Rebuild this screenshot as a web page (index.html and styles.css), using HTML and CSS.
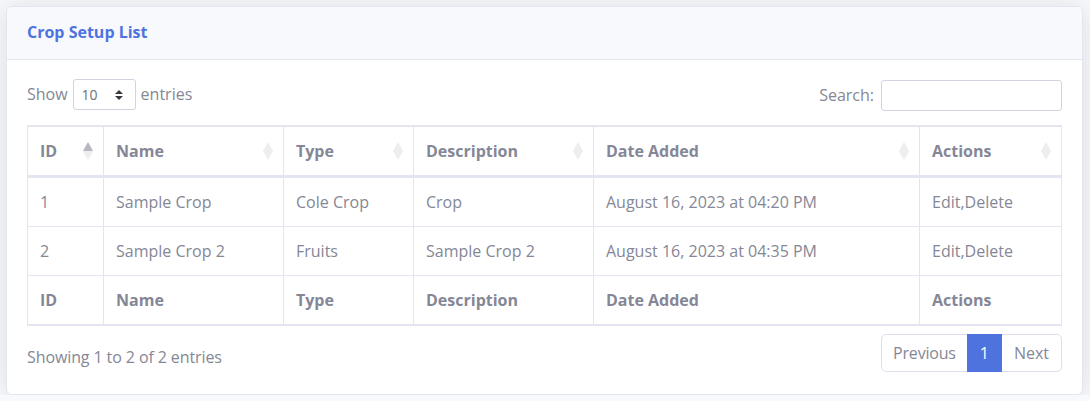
FILE: index.html
```html
<!DOCTYPE html>
<html lang="en">
<head>
<meta charset="utf-8">
<title>Crop Setup List</title>
<link rel="stylesheet" href="styles.css">
</head>
<body>
<div class="card">
  <div class="card-header">
    <h6 class="card-title">Crop Setup List</h6>
  </div>
  <div class="card-body">
    <div class="dt-top">
      <label class="dt-length">Show
        <span class="select-wrap">
          <select class="select">
            <option>10</option><option>25</option><option>50</option><option>100</option>
          </select>
          <svg class="select-arrow" width="8" height="10" viewBox="0 0 4 5"><path fill="#343a40" d="M2 0L0 2h4zm0 5L0 3h4z"/></svg>
        </span>
        entries</label>
      <label class="dt-search">Search:<input type="search" class="search-input"></label>
    </div>
    <table class="dt-table">
      <thead>
        <tr>
          <th class="c-id sort asc">ID</th>
          <th class="c-name sort">Name</th>
          <th class="c-type sort">Type</th>
          <th class="c-desc sort">Description</th>
          <th class="c-date sort">Date Added</th>
          <th class="c-act sort">Actions</th>
        </tr>
      </thead>
      <tbody>
        <tr>
          <td>1</td><td>Sample Crop</td><td>Cole Crop</td><td>Crop</td><td>August 16, 2023 at 04:20 PM</td><td>Edit,Delete</td>
        </tr>
        <tr>
          <td>2</td><td>Sample Crop 2</td><td>Fruits</td><td>Sample Crop 2</td><td>August 16, 2023 at 04:35 PM</td><td>Edit,Delete</td>
        </tr>
      </tbody>
      <tfoot>
        <tr>
          <th>ID</th><th>Name</th><th>Type</th><th>Description</th><th>Date Added</th><th>Actions</th>
        </tr>
      </tfoot>
    </table>
    <div class="dt-bottom">
      <div class="dt-info">Showing 1 to 2 of 2 entries</div>
      <ul class="pagination">
        <li class="page-item disabled"><span class="page-link">Previous</span></li>
        <li class="page-item active"><span class="page-link">1</span></li>
        <li class="page-item disabled"><span class="page-link">Next</span></li>
      </ul>
    </div>
  </div>
</div>
</body>
</html>
```
FILE: styles.css
```css
* { box-sizing: border-box; }
html, body { margin: 0; }
body {
  background: #f8f9fc;
  padding: 6px 7px 0 6px;
  font-family: "Open Sans", "Noto Sans", sans-serif;
  font-size: 16px;
  line-height: 1.5;
  color: #858796;
}
.card {
  background: #fff;
  border: 1px solid #e3e6f0;
  border-radius: 6px;
  box-shadow: 0 2px 28px 0 rgba(58, 59, 69, 0.15);
  overflow: hidden;
}
.card-header {
  background: #f8f9fc;
  border-bottom: 1px solid #e3e6f0;
  padding: 15px 20px 17px 20px;
}
.card-title {
  margin: 0;
  font-size: 16px;
  line-height: 20px;
  font-weight: 700;
  color: #4e73df;
}
.card-body {
  padding: 19px 20px 20px 20px;
}
.dt-top {
  display: flex;
  justify-content: space-between;
  align-items: flex-start;
}
.dt-length, .dt-search {
  display: flex;
  align-items: center;
  white-space: nowrap;
  margin-bottom: 8px;
  height: 32px;
  font-weight: 400;
}
.dt-length { padding-bottom: 3px; }
.dt-search { padding-bottom: 1px; }
.select-wrap {
  position: relative;
  display: inline-block;
  margin: 2px 5px 0 5px;
}
.select {
  appearance: none;
  -webkit-appearance: none;
  height: 31px;
  width: 63px;
  padding: 4px 28px 4px 8px;
  font-family: inherit;
  font-size: 14px;
  line-height: 21px;
  color: #6e707e;
  background: #fff;
  border: 1px solid #d1d3e2;
  border-radius: 3px;
  display: block;
}
.select-arrow {
  position: absolute;
  right: 13px;
  top: 11px;
  pointer-events: none;
}
.search-input {
  margin-left: 7px;
  margin-top: 1px;
  width: 181px;
  height: 31px;
  border: 1px solid #d1d3e2;
  border-radius: 3px;
  padding: 4px 8px;
  font-family: inherit;
  font-size: 14px;
  color: #6e707e;
  background: #fff;
}
.dt-table {
  width: 100%;
  table-layout: fixed;
  border-collapse: separate;
  border-spacing: 0;
  border: 1px solid #e3e6f0;
  margin: 6px 0;
  color: #858796;
}
.dt-table th, .dt-table td {
  padding: 12px;
  text-align: left;
  vertical-align: top;
  border-top: 1px solid #e3e6f0;
  border-right: 1px solid #e3e6f0;
  line-height: 24px;
}
.dt-table th:last-child, .dt-table td:last-child { border-right: 0; }
.dt-table th { font-weight: 700; }
.dt-table thead th {
  border-bottom: 2px solid #e3e6f0;
  position: relative;
  padding-right: 30px;
}
.dt-table tfoot th { border-bottom: 1px solid #e3e6f0; }
.c-id { width: 76px; }
.c-name { width: 180px; }
.c-type { width: 130px; }
.c-desc { width: 180px; }
.c-date { width: 326px; }
.sort::before, .sort::after {
  content: "";
  position: absolute;
  right: 10px;
  width: 0;
  height: 0;
  border-left: 5px solid transparent;
  border-right: 5px solid transparent;
}
.sort::before {
  bottom: 50%;
  border-bottom: 9px solid #eeeef1;
}
.sort::after {
  top: 50%;
  border-top: 9px solid #eeeef1;
}
.sort.asc::before { border-bottom-color: #b6b7c0; }
.dt-bottom {
  display: flex;
  justify-content: space-between;
  align-items: flex-start;
}
.dt-info {
  padding-top: 13px;
  white-space: nowrap;
  letter-spacing: -0.1px;
}
.pagination {
  display: flex;
  list-style: none;
  margin: 2px 0;
  padding: 0;
}
.page-link {
  display: block;
  padding: 8px 12px;
  margin-left: -1px;
  line-height: 20px;
  color: #858796;
  background: #fff;
  border: 1px solid #dddfeb;
}
.page-item:first-child .page-link {
  margin-left: 0;
  border-radius: 5px 0 0 5px;
  padding: 8px 11px;
  letter-spacing: -0.2px;
}
.page-item:last-child .page-link {
  border-radius: 0 5px 5px 0;
}
.page-item.active .page-link {
  background: #4e73df;
  border-color: #4e73df;
  color: #fff;
  position: relative;
  z-index: 1;
}
```
